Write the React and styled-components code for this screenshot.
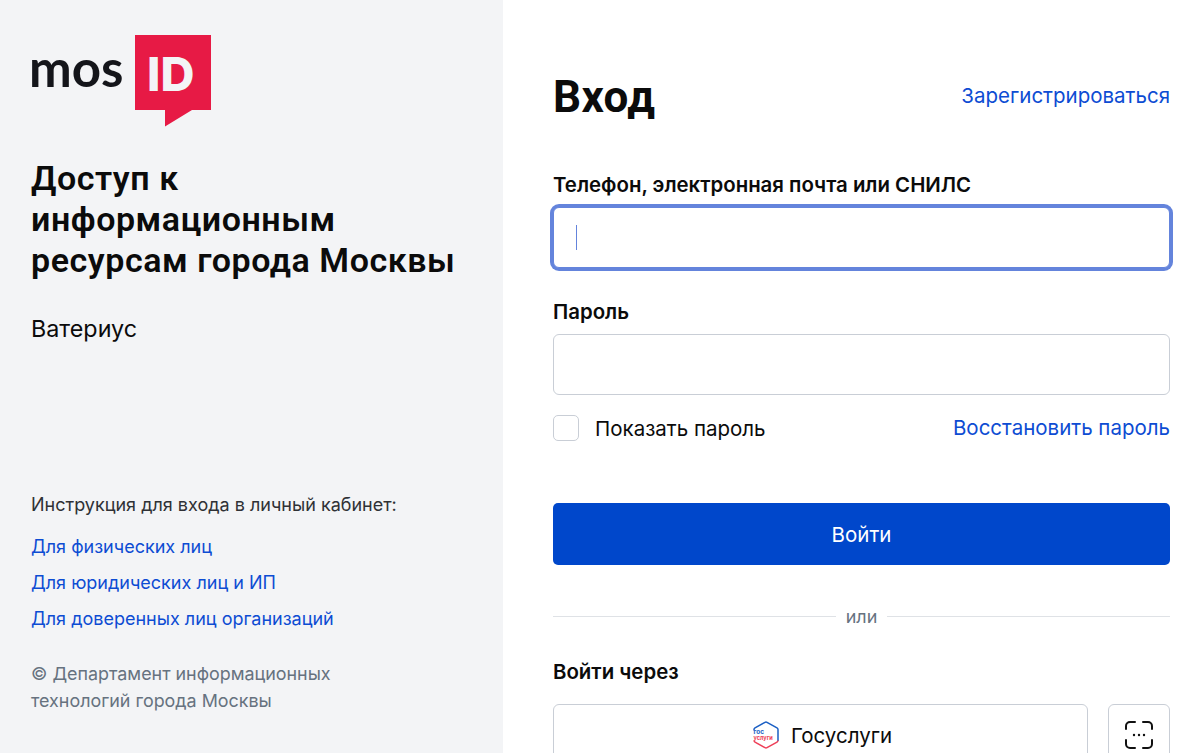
import React from 'react';
import styled, { createGlobalStyle } from 'styled-components';

const Global = createGlobalStyle`
  html, body {
    margin: 0;
    height: 100%;
    overflow: hidden;
    background: #fff;
  }
  * {
    box-sizing: border-box;
  }
`;

function Logo() {
  return (
    <LogoWrap>
      <LogoText>mos</LogoText>
      <LogoMark>
        <svg width="76" height="92" viewBox="0 0 76 92">
          <path d="M0 0H76V75H57L30 91.5V75H0Z" fill="#e71a45" />
        </svg>
        <LogoId>ID</LogoId>
      </LogoMark>
    </LogoWrap>
  );
}

function GosIcon() {
  return (
    <svg width="26" height="28" viewBox="0 0 26 28">
      <path d="M1 9.5V8.6a2 2 0 0 1 1-1.7L12 1.3a2 2 0 0 1 2 0l10 5.6a2 2 0 0 1 1 1.7V20" fill="none" stroke="#1a5fc4" strokeWidth="1.5" />
      <path d="M1 19.5a2 2 0 0 0 1 1.6l10 5.6a2 2 0 0 0 2 0l10-5.6a2 2 0 0 0 1-1.6" fill="none" stroke="#ee3f58" strokeWidth="1.5" />
      <text x="0.5" y="13" fontSize="6.4" fontWeight="700" fontFamily="Inter, sans-serif" fill="#1a5fc4">гос</text>
      <text x="0.5" y="18.5" fontSize="5.6" fontWeight="700" fontFamily="Inter, sans-serif" fill="#ee3f58">услуги</text>
    </svg>
  );
}

function QrIcon() {
  return (
    <svg width="30" height="30" viewBox="0 0 30 30" fill="none" stroke="#111" strokeWidth="2" strokeLinecap="round">
      <path d="M2 9V6a4 4 0 0 1 4-4h5" />
      <path d="M19 2h5a4 4 0 0 1 4 4v3" />
      <path d="M2 20v4a4 4 0 0 0 4 4h5" />
      <path d="M28 20v4a4 4 0 0 1-4 4h-5" />
      <path d="M10 15h.01M15 15h.01M20 15h.01" strokeWidth="2.4" />
    </svg>
  );
}

export default function App() {
  return (
    <Page>
      <Global />
      <Side>
        <Logo />
        <Title>Доступ к информационным ресурсам города Москвы</Title>
        <ServiceName>Ватериус</ServiceName>
        <SideBottom>
          <HelpTitle>Инструкция для входа в личный кабинет:</HelpTitle>
          <HelpLinks>
            <HelpLink href="#">Для физических лиц</HelpLink>
            <HelpLink href="#">Для юридических лиц и ИП</HelpLink>
            <HelpLink href="#">Для доверенных лиц организаций</HelpLink>
          </HelpLinks>
          <Copyright>© Департамент информационных технологий города Москвы</Copyright>
        </SideBottom>
      </Side>
      <Main>
        <Header>
          <Heading>Вход</Heading>
          <RegisterLink href="#">Зарегистрироваться</RegisterLink>
        </Header>
        <Field>
          <Label>Телефон, электронная почта или СНИЛС</Label>
          <InputBox focused>
            <Caret />
          </InputBox>
        </Field>
        <Field>
          <Label>Пароль</Label>
          <InputBox />
        </Field>
        <OptionsRow>
          <CheckLabel>
            <CheckBox />
            Показать пароль
          </CheckLabel>
          <TextLink href="#">Восстановить пароль</TextLink>
        </OptionsRow>
        <SubmitButton>Войти</SubmitButton>
        <Divider>или</Divider>
        <Label>Войти через</Label>
        <ExternalRow>
          <GosButton>
            <GosIcon />
            Госуслуги
          </GosButton>
          <QrButton>
            <QrIcon />
          </QrButton>
        </ExternalRow>
      </Main>
    </Page>
  );
}

const Page = styled.div`
  display: flex;
  width: 1200px;
  height: 753px;
  overflow: hidden;
  font-family: Inter, 'Noto Sans', sans-serif;
  color: #0b0b0b;
`;

const Side = styled.aside`
  width: 503px;
  height: 753px;
  flex-shrink: 0;
  background: #f3f4f6;
  padding: 35px 30px 0 31px;
  display: flex;
  flex-direction: column;
`;

const LogoWrap = styled.div`
  display: flex;
  align-items: flex-start;
  gap: 12px;
  height: 92px;
  margin-left: -2px;
`;

const LogoText = styled.span`
  font-family: Lato, sans-serif;
  font-weight: 700;
  font-size: 51px;
  line-height: 66px;
  color: #14151a;
  width: 94px;
`;

const LogoMark = styled.div`
  position: relative;
  width: 76px;
  height: 92px;
`;

const LogoId = styled.span`
  position: absolute;
  top: 14px;
  left: 12px;
  font-weight: 800;
  font-size: 47px;
  line-height: 50px;
  color: #f3f4f6;
`;

const Title = styled.h2`
  margin: 31px 0 0;
  font-family: Roboto, sans-serif;
  font-size: 34px;
  line-height: 41px;
  font-weight: 600;
  letter-spacing: 0.55px;
  width: 440px;
`;

const ServiceName = styled.div`
  margin-top: 33px;
  font-size: 23.3px;
  line-height: 30px;
`;

const SideBottom = styled.div`
  margin-top: 149px;
`;

const HelpTitle = styled.div`
  font-size: 18px;
  line-height: 24px;
  color: #2f3135;
`;

const HelpLinks = styled.div`
  margin-top: 18px;
  display: flex;
  flex-direction: column;
  gap: 12px;
`;

const HelpLink = styled.a`
  font-size: 18px;
  line-height: 24px;
  color: #0d4cd3;
  text-decoration: none;
`;

const Copyright = styled.div`
  margin-top: 29px;
  width: 330px;
  font-size: 17.9px;
  line-height: 27px;
  color: #66727f;
`;

const Main = styled.main`
  flex: 1;
  padding: 70px 30px 0 50px;
`;

const Header = styled.div`
  display: flex;
  justify-content: space-between;
  align-items: center;
  height: 54px;
  margin-bottom: 47px;
`;

const Heading = styled.h1`
  margin: 0;
  font-family: Roboto, sans-serif;
  font-size: 44px;
  font-weight: 700;
  line-height: 54px;
  letter-spacing: 0.4px;
`;

const TextLink = styled.a`
  font-size: 20.5px;
  line-height: 30px;
  color: #0d4cd3;
  text-decoration: none;
`;

const RegisterLink = styled(TextLink)`
  margin-bottom: 2px;
`;

const Field = styled.div`
  margin-bottom: 30px;
`;

const Label = styled.div`
  padding-top: 1px;
  font-size: 20.4px;
  font-weight: 600;
  line-height: 26px;
  margin-bottom: 9px;
`;

const InputBox = styled.div`
  height: 61px;
  background: #fff;
  border: 1px solid #c9ced6;
  border-radius: 6px;
  display: flex;
  align-items: center;
  padding-left: 22px;
  box-shadow: ${({ focused }) => (focused ? '0 0 0 3px #6484dc' : 'none')};
  border-color: ${({ focused }) => (focused ? '#6484dc' : '#c9ced6')};
`;

const Caret = styled.span`
  width: 1px;
  height: 25px;
  background: #6484dc;
`;

const OptionsRow = styled.div`
  display: flex;
  justify-content: space-between;
  align-items: center;
  height: 38px;
  margin-top: -16px;
`;

const CheckLabel = styled.label`
  display: flex;
  align-items: center;
  gap: 16px;
  font-size: 20.5px;
`;

const CheckBox = styled.span`
  width: 26px;
  height: 26px;
  border: 1px solid #c9ced6;
  border-radius: 5px;
  background: #fff;
`;

const SubmitButton = styled.button`
  display: block;
  width: 100%;
  height: 62px;
  margin-top: 56px;
  border: 0;
  border-radius: 5px;
  background: #0047cb;
  color: #fff;
  font-family: inherit;
  font-size: 20.5px;
`;

const Divider = styled.div`
  display: flex;
  align-items: center;
  gap: 10px;
  margin: 39px 0 30px;
  height: 24px;
  font-size: 18px;
  color: #66727f;

  &::before,
  &::after {
    content: '';
    flex: 1;
    height: 1px;
    background: #dfe2e6;
  }
`;

const ExternalRow = styled.div`
  display: flex;
  gap: 20px;
  margin-top: 19px;
`;

const ExternalButton = styled.button`
  height: 62px;
  display: flex;
  align-items: center;
  justify-content: center;
  gap: 12px;
  background: #fff;
  border: 1px solid #c9ced6;
  border-radius: 6px;
  font-family: inherit;
  font-size: 20.5px;
  color: #0b0b0b;
`;

const GosButton = styled(ExternalButton)`
  flex: 1;
  padding: 0 0 0 4px;
`;

const QrButton = styled(ExternalButton)`
  flex: 0 0 62px;
  padding: 0;
`;
